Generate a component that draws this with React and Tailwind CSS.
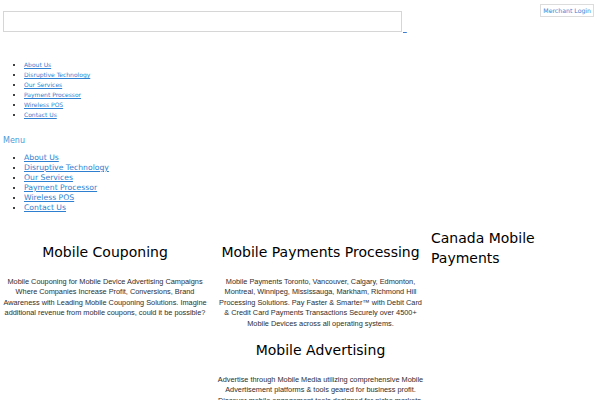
import React from 'react'

const links = [
  'About Us',
  'Disruptive Technology',
  'Our Services',
  'Payment Processor',
  'Wireless POS',
  'Contact Us',
]

const Col = ({ title, children, className = '' }) => (
  <div className={className}>
    <h3 className="text-[14px] leading-[20px] text-black font-normal text-center">{title}</h3>
    <p className="mt-[15px] text-[7.35px] leading-[10.4px] text-[#2e2e2e] text-center font-['Liberation_Sans',Arial,sans-serif]">
      {children}
    </p>
  </div>
)

export default function App() {
  return (
    <div className="relative w-[600px] h-[400px] overflow-hidden bg-white font-['DejaVu_Sans',Verdana,sans-serif]">
      <a
        href="#"
        className="absolute top-[4px] right-[6px] border border-[#dcdcdc] px-[2px] text-[6.2px] leading-[11px] text-[#3b7fd4]"
      >
        Merchant Login
      </a>

      <div className="pt-[11px] pl-[3px] flex items-end">
        <textarea className="w-[399px] h-[21px] border border-[#d6d6d6] resize-none outline-none" />
        <a href="#" className="ml-[1px] text-[6px] leading-[6px] text-[#3b7fd4] underline">&nbsp;&nbsp;</a>
      </div>

      <ul className="mt-[28px] list-disc pl-[24px] text-[6px] leading-[10px]">
        {links.map((l) => (
          <li key={l}>
            <a href="#" className="text-[#2f7fd0] underline">{l}</a>
          </li>
        ))}
      </ul>

      <div className="mt-[15px] pl-[3px] text-[8px] leading-[11px] text-[#4a9ad8]">Menu</div>

      <ul className="mt-[7px] list-disc pl-[24px] text-[7.7px] leading-[10px]">
        {links.map((l) => (
          <li key={l}>
            <a href="#" className="text-[#2f7fd0] underline">{l}</a>
          </li>
        ))}
      </ul>

      <div className="mt-[15px] flex items-start">
        <div className="w-[210px] pt-[14px] px-[3px]">
          <Col title="Mobile Couponing">
            Mobile Couponing for Mobile Device Advertising Campaigns Where Companies Increase Profit, Conversions, Brand
            Awareness with Leading Mobile Couponing Solutions. Imagine additional revenue from mobile coupons, could it be
            possible?
          </Col>
        </div>
        <div className="w-[221px] pt-[14px] px-[8px] flex flex-col gap-[11px]">
          <Col title="Mobile Payments Processing">
            Mobile Payments Toronto, Vancouver, Calgary, Edmonton, Montreal, Winnipeg, Mississauga, Markham, Richmond Hill
            Processing Solutions. Pay Faster &amp; Smarter™ with Debit Card &amp; Credit Card Payments Transactions
            Securely over 4500+ Mobile Devices across all operating systems.
          </Col>
          <Col title="Mobile Advertising" className="-mx-[2px]">
            Advertise through Mobile Media utilizing comprehensive Mobile Advertisement platforms &amp; tools geared for
            business profit. Discover mobile engagement tools designed for niche markets.
          </Col>
        </div>
        <div className="flex-1">
          <h3 className="text-[14px] leading-[20px] text-black font-normal">Canada Mobile Payments</h3>
        </div>
      </div>
    </div>
  )
}
